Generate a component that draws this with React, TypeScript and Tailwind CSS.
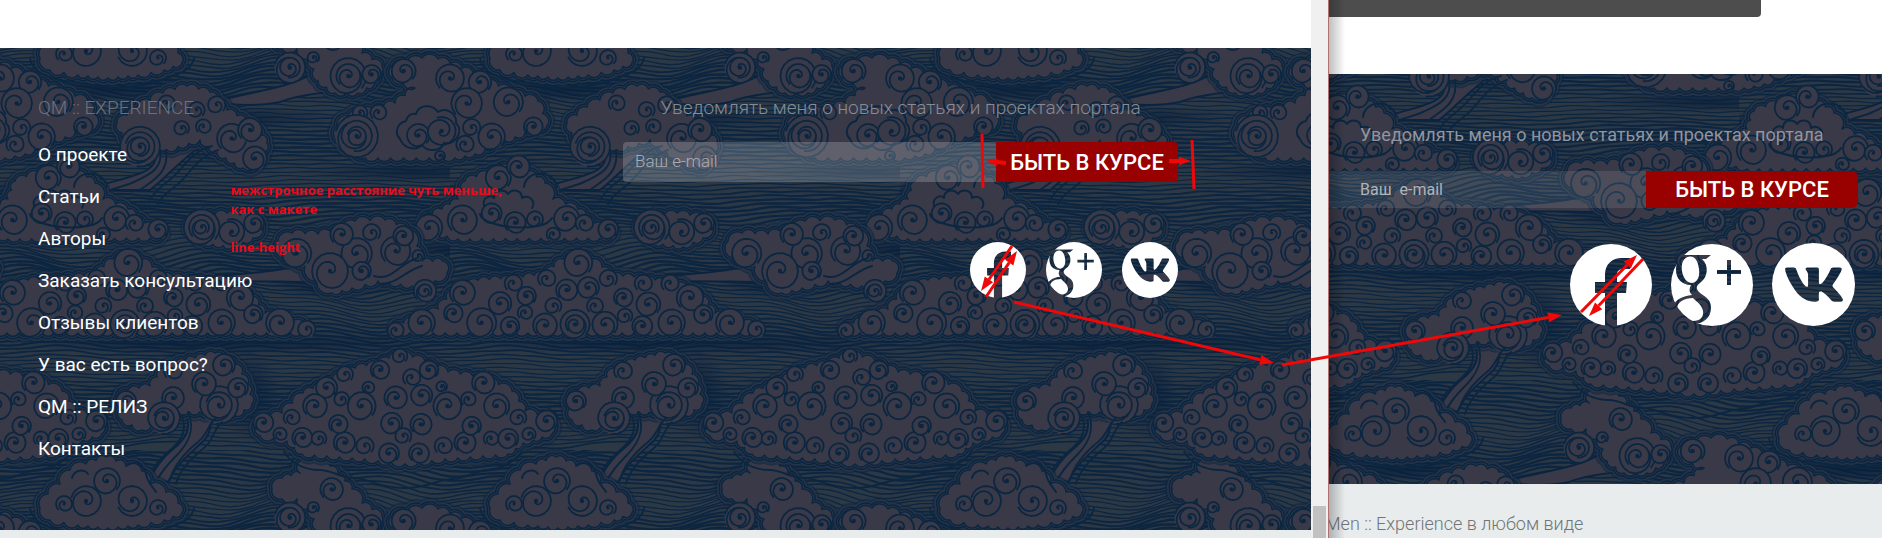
import React from "react";

type P = [number, number];
type Curl = [number, number, number, number?];

const TILE = 450;

/* ---------- geometry helpers ---------- */

const f = (n: number) => n.toFixed(1);

// Curl that follows its rim most of the way round, then winds in to the centre.
function curl([x, y, r, turn = 0]: Curl, i: number): string {
  const dir = i % 2 ? 1 : -1;
  const total = Math.PI * (r > 9 ? 3.6 : 3.1);
  const steps = 32;
  let d = "";
  for (let s = 0; s <= steps; s++) {
    const t = s / steps;
    const a = turn + (dir > 0 ? 2.4 : 0.7) + dir * t * total;
    const k = t < 0.45 ? 1 : 1 - ((t - 0.45) / 0.55) * 0.9;
    const rr = r * k;
    d += (s ? "L" : "M") + f(x + Math.cos(a) * rr) + " " + f(y + Math.sin(a) * rr);
  }
  return d;
}

// Closed outline whose edges are rows of small outward bumps.
function scallop(points: P[], size: number): string {
  let d = `M${points[0][0]} ${points[0][1]}`;
  points.forEach(([x0, y0], i) => {
    const [x1, y1] = points[(i + 1) % points.length];
    const len = Math.hypot(x1 - x0, y1 - y0);
    const n = Math.max(1, Math.round(len / size));
    const r = f((len / n) * 0.58);
    for (let k = 1; k <= n; k++) {
      d += `A${r} ${r} 0 0 1 ${f(x0 + ((x1 - x0) * k) / n)} ${f(y0 + ((y1 - y0) * k) / n)}`;
    }
  });
  return d + "Z";
}

function wave(y: number, amp: number, phase: number): string {
  let d = "";
  for (let x = -10; x <= 460; x += 10) {
    const a = (x / TILE) * Math.PI * 2;
    const v =
      Math.sin(a * 2 + phase) * amp +
      Math.sin(a * 5 + phase * 2) * amp * 0.35 +
      Math.sin(a * 9 + y) * 0.5;
    d += (d ? "L" : "M") + x + " " + f(y + v);
  }
  return d;
}

const at = (ox: number, oy: number, list: number[][]): Curl[] =>
  list.map(([x, y, r, t]) => [ox + x / 3, oy + y / 3, r / 3, t] as Curl);
const poly = (ox: number, oy: number, list: number[][]): P[] =>
  list.map(([x, y]) => [Math.round(ox + x / 3), Math.round(oy + y / 3)] as P);

/* ---------- clouds of one tile ---------- */

interface Cloud {
  body: P[];
  bump: number;
  curls: Curl[];
  extra?: string[];
  smooth?: string;
}

const clouds: Cloud[] = [
  {
    // long bank with a trailing tail
    body: poly(225, 46, [[280, 105], [268, 70], [250, 40], [215, 10], [170, 10], [140, -20], [170, -55], [225, -70], [225, -105], [290, -110], [340, -70], [380, -20], [410, 20], [470, 60], [450, 110], [400, 140], [330, 140]]),
    bump: 12,
    curls: at(225, 46, [[370, 90, 54], [370, 90, 36], [265, 35, 17], [195, 65, 46, 1], [195, 65, 30, 1], [320, -20, 34], [440, 85, 28]]),
    smooth: "M215 102C245 92 285 90 312 74L330 92C310 94 290 98 280 102C262 106 235 106 215 102Z",
  },
  {
    body: poly(225, 46, [[500, 60], [590, 35], [640, 40], [710, 65], [780, 105], [860, 135], [940, 165], [965, 240], [900, 262], [840, 285], [750, 325], [690, 335], [420, 335], [345, 290], [335, 240], [370, 210], [440, 185], [510, 170], [570, 125], [500, 95]]),
    bump: 13,
    curls: at(225, 46, [[536, 75, 36], [675, 97, 42], [765, 108, 34], [725, 172, 46], [850, 168, 44], [460, 200, 24], [405, 200, 22], [395, 270, 64, 1], [395, 270, 46, 1], [395, 270, 28, 1], [580, 268, 34], [650, 255, 42, 2], [800, 272, 40], [720, 295, 26], [645, 330, 15], [925, 242, 28], [740, 245, 26]]),
    extra: ["M406 121c-9 2-12 12-6 18 4 10 16 12 22 6 6 8 20 6 22-2 12 2 20-12 12-20 1-10-10-16-18-11-6-9-20-7-22 2-5-1-9 2-10 7"],
  },
  {
    // leaning cloud with a flowing trunk
    body: poly(0, 30, [[350, 280], [410, 230], [490, 190], [560, 168], [630, 185], [680, 240], [770, 290], [800, 340], [780, 400], [730, 415], [650, 370], [600, 330], [500, 360], [440, 330], [380, 340]]),
    bump: 12,
    curls: at(0, 30, [[420, 350, 60, 1], [420, 350, 44, 1], [420, 350, 28, 1], [695, 325, 44], [765, 385, 36], [750, 300, 36], [545, 295, 22], [610, 290, 22], [650, 225, 26], [500, 220, 24], [590, 240, 24]]),
    smooth: "M150 145C162 160 152 170 138 174C118 182 104 182 92 190L150 190C168 176 180 160 206 142C190 134 170 134 150 145Z",
    extra: ["M160 150C164 170 146 176 134 182S112 186 104 196M166 150C170 174 150 182 140 190M212 146C190 152 184 168 172 178S156 190 150 200M218 150C196 158 190 174 178 184S164 194 158 204"],
  },
  {
    body: poly(225, 196, [[590, 70], [650, 40], [700, 10], [720, -45], [790, -72], [850, -92], [910, -75], [960, -40], [985, 10], [1060, 40], [1110, 80], [1165, 98], [1160, 125], [700, 128], [600, 105]]),
    bump: 12,
    curls: at(225, 196, [[612, 95, 40], [712, 72, 44], [800, 52, 30], [870, 80, 32], [1025, 68, 38], [1078, 82, 26], [1150, 100, 30], [985, 115, 20], [820, -55, 38], [880, -88, 34], [930, 70, 24]]),
    extra: ["M524 187c2-18 30-18 33 0M480 214c2 14 64 20 72 4M484 206c-2-8 6-12 10-8 0-8 10-10 14-4 4-6 14-4 14 4 8-4 14 4 10 10"],
  },
  {
    body: poly(0, 30, [[560, 590], [610, 555], [680, 550], [760, 562], [790, 595], [760, 625], [700, 650], [610, 640]]),
    bump: 11,
    curls: at(0, 30, [[605, 592, 54], [605, 592, 38], [605, 592, 22], [695, 605, 38, 2], [762, 580, 30]]),
  },
  {
    body: poly(225, 196, [[160, 135], [200, 112], [280, 115], [350, 95], [390, 75], [480, 72], [550, 100], [575, 150], [590, 195], [655, 195], [665, 230], [630, 255], [560, 270], [460, 255], [380, 275], [320, 290], [275, 255], [240, 210], [170, 185]]),
    bump: 13,
    curls: at(225, 196, [[395, 172, 46], [512, 165, 44], [215, 172, 44], [315, 225, 54], [580, 180, 18], [350, 115, 34], [410, 225, 28], [535, 120, 30], [440, 110, 26], [600, 285, 34], [600, 285, 20]]),
    smooth: "M195 282C220 272 260 276 296 266L310 282C280 282 240 280 195 282Z",
    extra: ["M374 276C392 282 400 262 418 258M380 284C398 284 406 270 422 266"],
  },
  {
    // low symmetrical bank
    body: poly(225, 196, [[500, 395], [570, 365], [640, 340], [690, 280], [760, 252], [860, 245], [960, 235], [1015, 190], [1060, 175], [1100, 190], [1160, 238], [1260, 245], [1350, 260], [1430, 300], [1470, 350], [1550, 375], [1600, 400], [1580, 412], [520, 412]]),
    bump: 12,
    curls: at(225, 196, [[1060, 200, 42], [1025, 282, 32], [1090, 275, 32], [965, 248, 26], [1150, 248, 26], [1195, 305, 28], [905, 300, 28], [712, 290, 38], [825, 322, 34], [865, 262, 26], [770, 380, 44], [685, 352, 28], [590, 380, 40], [512, 403, 24], [855, 390, 28], [960, 388, 36], [1050, 385, 44], [1050, 385, 28], [1140, 385, 38], [1252, 390, 30], [1270, 325, 36], [1255, 262, 26], [1340, 380, 40], [1395, 305, 40], [1435, 355, 28], [1515, 380, 42], [1595, 400, 26], [1335, 262, 26], [985, 330, 24], [1110, 330, 24], [1200, 360, 22], [900, 350, 22]]),
  },
  {
    // great symmetrical cloud
    body: poly(225, 346, [[95, 225], [170, 200], [235, 140], [320, 100], [390, 65], [460, 50], [525, 20], [600, 45], [670, 78], [780, 95], [860, 135], [900, 195], [975, 215], [980, 265], [895, 290], [850, 325], [660, 340], [540, 355], [420, 340], [230, 325], [185, 285], [105, 270]]),
    bump: 12,
    curls: at(225, 346, [[525, 30, 22], [465, 72, 28], [612, 72, 28], [775, 110, 34], [305, 125, 32], [430, 125, 18], [650, 122, 16], [512, 155, 34], [590, 148, 32], [270, 180, 36], [410, 180, 42], [667, 180, 42], [815, 180, 38], [115, 230, 30], [500, 232, 32], [588, 235, 32], [965, 225, 32], [165, 265, 20], [912, 265, 20], [232, 275, 30], [282, 278, 22], [798, 278, 22], [850, 278, 30], [358, 290, 32], [535, 270, 24], [720, 290, 32], [492, 322, 30], [582, 322, 30], [360, 85, 24], [340, 235, 28], [740, 240, 28], [200, 215, 24], [880, 215, 24], [560, 95, 26], [420, 300, 26], [655, 300, 26], [350, 160, 22], [730, 160, 22]]),
    extra: ["M284 452c10 14 24 18 36 18s20 8 34 8 24 10 50 10 30-8 48-9 20-8 34-9 26-6 36-18"],
  },
  {
    // tree-shaped cloud
    body: [[118, 396], [128, 390], [150, 386], [164, 368], [185, 360], [215, 353], [236, 364], [248, 384], [252, 404], [236, 416], [200, 412], [178, 412], [160, 422], [142, 430], [122, 420]],
    bump: 12,
    curls: [[126, 401, 10], [173, 371, 9], [224, 365, 11], [173, 398, 11], [219, 405, 19, 1], [219, 405, 13, 1], [164, 418, 16, 1], [164, 418, 10, 1], [238, 388, 10], [204, 384, 12], [98, 420, 10]],
    smooth: "M184 410C194 430 184 440 172 450C162 458 156 468 150 478L168 482C178 462 190 454 200 444C214 434 208 420 216 410Z",
    extra: ["M182 416c6 16-2 26-14 36s-16 18-20 26M188 412c8 18 0 32-12 44s-16 18-20 26M216 418c-8 6-8 16-18 24s-24 22-28 38M222 422c-8 6-8 18-18 26s-24 20-28 36"],
  },
  {
    // dark-rimmed cloud
    body: [[40, 508], [48, 494], [60, 484], [70, 470], [86, 464], [106, 457], [126, 465], [142, 471], [150, 484], [166, 492], [178, 503], [182, 513], [164, 520], [138, 525], [108, 528], [78, 525], [50, 520]],
    bump: 12,
    curls: [[107, 481, 13], [86, 501, 15, 1], [132, 501, 15, 2], [64, 504, 8], [158, 508, 8]],
    extra: ["M30 508c2 16 24 22 44 24s24 6 36 6 34-2 52-8 30-10 32-22", "M72 478c2-8 12-10 16-4M126 466c8-6 18-2 20 8s8 14 10 18"],
  },
];

const waves: { d: string; w: number }[] = [];
for (let i = 0; i < 112; i++) {
  const y = (i * TILE) / 112;
  const a = (y / TILE) * Math.PI * 2;
  waves.push({
    d: wave(y, 4 + 3 * Math.sin(a * 2), Math.sin(a) * 3),
    w: 1.9 + 0.6 * Math.sin(a * 7),
  });
}

// Deep water shadows lying between the clouds.
const shadows = [
  [225, 343, 240, 7],
  [230, 118, 110, 8],
  [420, 172, 120, 7],
  [330, 285, 60, 9],
  [60, 455, 70, 8],
  [400, 482, 120, 7],
  [110, 90, 100, 8],
  [20, 195, 50, 10],
  [250, 395, 30, 30],
  [450, 250, 70, 9],
];

function CloudTile({ id }: { id: string }) {
  return (
    <g id={id} fill="none" strokeLinecap="round" strokeLinejoin="round">
      {clouds.map((c, i) => {
        const d = scallop(c.body, c.bump);
        return (
          <g key={i}>
            {c.smooth && <path d={c.smooth} fill="#393948" stroke="#0a2440" strokeWidth="2" />}
            <path d={d} stroke="#0a2440" strokeWidth="13" strokeOpacity="0.55" />
            <path d={d} stroke="#2a3646" strokeWidth="9" strokeOpacity="0.8" />
            <path d={d} stroke="#0a2440" strokeWidth="6" />
            <path d={d} stroke="#2c3646" strokeWidth="3" />
            <path d={d} fill="#393948" stroke="#0b2640" strokeWidth="1.6" />
            {c.curls.map((s, k) => (
              <g key={k}>
                <circle cx={s[0]} cy={s[1]} r={s[2]} fill="#393948" />
                <path d={curl(s, k)} stroke="#0b2640" strokeWidth="1.8" />
                <circle cx={s[0]} cy={s[1]} r={s[2] > 9 ? 2.2 : 1.5} fill="#0b2540" />
              </g>
            ))}
            {c.extra?.map((e, k) => (
              <path key={k} d={e} stroke="#0b2640" strokeWidth="2" />
            ))}
          </g>
        );
      })}
    </g>
  );
}

const offsets = [-450, 0, 450];

function CloudBackdrop({ id, x, y }: { id: string; x: number; y: number }) {
  return (
    <svg className="absolute inset-0 h-full w-full" aria-hidden="true">
      <defs>
        <radialGradient id={id + "-deep"}>
          <stop offset="0" stopColor="#08203c" stopOpacity="0.8" />
          <stop offset="1" stopColor="#08203c" stopOpacity="0" />
        </radialGradient>
        <pattern id={id} x={x} y={y} width={TILE} height={TILE} patternUnits="userSpaceOnUse">
          <rect width={TILE} height={TILE} fill="#2d3845" />
          {waves.map((w, i) => (
            <path key={i} d={w.d} fill="none" stroke="#0c2540" strokeWidth={w.w} />
          ))}
          {shadows.map(([cx, cy, rx, ry], i) => (
            <ellipse key={i} cx={cx} cy={cy} rx={rx} ry={ry * 1.6} fill={`url(#${id}-deep)`} />
          ))}
          <CloudTile id={id + "-clouds"} />
          {offsets.map((ox) =>
            offsets.map((oy) =>
              ox || oy ? <use key={ox + "_" + oy} href={"#" + id + "-clouds"} x={ox} y={oy} /> : null
            )
          )}
        </pattern>
      </defs>
      <rect width="100%" height="100%" fill={`url(#${id})`} />
    </svg>
  );
}

/* ---------- social icons ---------- */

const glyphs = {
  facebook: (
    <path d="M35 82V49H25V38H35V31C35 20 42 14 52 14H60V25H54C49 25 47 27 47 31V38H57L56 49H47V82Z" />
  ),
  google: (
    <>
      <path
        fillRule="evenodd"
        d="M12 11H40L35 15H31C38 21 37 33 30 38C25 42 24 44 29 49C36 54 40 56 40 64C40 74 32 80 22 80C10 80 0 73 2 63C4 55 12 52 21 51C18 48 18 45 20 41C10 41 5 34 5 26C5 18 8 14 12 11ZM19 12.500C12 13 10 20 11 27C12 34 16 39 21 39C27 38 29 32 28 25C27 17 24 12 19 12.500ZM22 54C13 54 6 58 6 65C7 72 14 77 22 77C29 77 33 73 32 67C31 61 26 58 22 54Z"
      />
      <path d="M56 16H60V26H70V30H60V41H56V30H46V26H56Z" />
    </>
  ),
  vk: (
    <path
      transform="translate(11 14) scale(0.106)"
      d="M545 117.7c3.700-12.500 0-21.700-17.800-21.700h-58.900c-15 0-21.900 7.900-25.600 16.700 0 0-30 73.100-72.400 120.500-13.700 13.700-20 18.100-27.500 18.100-3.700 0-9.400-4.400-9.400-16.900V117.700c0-15-4.200-21.700-16.600-21.700h-92.600c-9.400 0-15 7-15 13.500 0 14.200 21.200 17.500 23.400 57.500v86.800c0 19-3.400 22.500-10.900 22.500-20 0-68.600-73.400-97.400-157.400-5.800-16.300-11.500-22.900-26.600-22.900H38.800c-16.800 0-20.200 7.900-20.200 16.700 0 15.600 20 93.100 93.100 195.500C160.400 378.100 229 416 291.400 416c37.500 0 42.100-8.400 42.100-22.900 0-66.800-3.400-73.100 15.400-73.100 8.700 0 23.700 4.400 58.700 38.100 40 40 46.600 57.900 69 57.900h58.900c16.800 0 25.300-8.400 20.400-25-11.200-34.900-86.900-106.700-90.300-111.500-8.700-11.200-6.200-16.200 0-26.200.1-.1 72-101.300 79.400-135.600z"
    />
  ),
};

function Social({ name, pane, className }: { name: keyof typeof glyphs; pane: string; className: string }) {
  const id = `${pane}-${name}`;
  return (
    <a href="#" aria-label={name} className={className}>
      <svg viewBox="0 0 82 82" className="h-full w-full">
        <mask id={id}>
          <rect width="82" height="82" fill="#fff" />
          <g fill="#000">{glyphs[name]}</g>
        </mask>
        <circle cx="41" cy="41" r="41" fill="#fff" mask={`url(#${id})`} />
      </svg>
    </a>
  );
}

/* ---------- review marks ---------- */

function Arrow({ from, to, w = 3, head = 14 }: { from: P; to: P; w?: number; head?: number }) {
  const a = Math.atan2(to[1] - from[1], to[0] - from[0]);
  const bx = to[0] - Math.cos(a) * head;
  const by = to[1] - Math.sin(a) * head;
  const s = head * 0.36;
  return (
    <>
      <path d={`M${from[0]} ${from[1]}L${f(bx)} ${f(by)}`} stroke="#f00808" strokeWidth={w} />
      <path
        fill="#f00808"
        d={`M${to[0]} ${to[1]}L${f(bx - Math.sin(a) * s)} ${f(by + Math.cos(a) * s)}L${f(bx + Math.sin(a) * s)} ${f(by - Math.cos(a) * s)}Z`}
      />
    </>
  );
}

function Marks() {
  return (
    <svg className="pointer-events-none absolute top-0 left-0" width="1882" height="538" aria-hidden="true">
      <path d="M982 134L983 188M1192 140L1194 189" stroke="#f00808" strokeWidth="3" />
      <Arrow from={[1006, 163]} to={[986, 161]} head={11} w={4} />
      <Arrow from={[1169, 161]} to={[1191, 161]} head={12} w={4} />
      <Arrow from={[1012, 246]} to={[981, 291]} />
      <Arrow from={[986, 297]} to={[1017, 251]} />
      <Arrow from={[1014, 302]} to={[1274, 363]} />
      <Arrow from={[1282, 365]} to={[1562, 315]} />
      <Arrow from={[1581, 312]} to={[1637, 255]} />
      <Arrow from={[1643, 259]} to={[1589, 316]} />
    </svg>
  );
}

const links = [
  "О проекте",
  "Статьи",
  "Авторы",
  "Заказать консультацию",
  "Отзывы клиентов",
  "У вас есть вопрос?",
  "QM :: РЕЛИЗ",
  "Контакты",
];

export default function App() {
  return (
    <div className="relative grid h-screen grid-cols-[1311fr_18px_553fr] overflow-hidden bg-white font-['Roboto',sans-serif]">
      <div className="flex min-w-0 flex-col bg-[#e8ecec]">
        <div className="h-12 shrink-0 bg-white" />
        <footer className="relative shrink-0 overflow-hidden">
          <CloudBackdrop id="sky-left" x={0} y={-48} />
          <div className="relative flex justify-between pt-[46px] pr-[133px] pb-[60px] pl-[38px]">
            <div className="flex">
              <nav>
                <h2 className="mb-3 text-[19px] leading-7 font-light text-[#6b727e]">QM :: EXPERIENCE</h2>
                <ul>
                  {links.map((l) => (
                    <li key={l} className="h-[42px] text-[19px] leading-[42px] text-white">
                      <a href="#">{l}</a>
                    </li>
                  ))}
                </ul>
              </nav>
              <div className="-ml-[22px] pt-[87px] font-['Open_Sans',sans-serif] text-[13px] leading-[19px] font-bold text-[#e80c1a]">
                <p>
                  межстрочное расстояние чуть меньше,
                  <br />
                  как с макете
                </p>
                <p className="mt-[19px]">line-height</p>
              </div>
            </div>
            <div className="w-[555px]">
              <h2 className="mb-5 text-center text-[19px] leading-7 font-light text-[#858c96]">
                Уведомлять меня о новых статьях и проектах портала
              </h2>
              <form className="flex h-10">
                <input
                  type="email"
                  aria-label="Ваш e-mail"
                  placeholder="Ваш e-mail"
                  className="min-w-0 flex-1 rounded-l bg-white/20 px-3 text-[17px] font-light text-white outline-none placeholder:text-[#a9adb4]"
                />
                <button type="button" className="w-[182px] rounded-r bg-[#990000] text-[22px] font-medium whitespace-nowrap text-white">
                  БЫТЬ В КУРСЕ
                </button>
              </form>
              <div className="mt-[60px] flex justify-end gap-5">
                <Social name="facebook" pane="l" className="h-14 w-14" />
                <Social name="google" pane="l" className="h-14 w-14" />
                <Social name="vk" pane="l" className="h-14 w-14" />
              </div>
            </div>
          </div>
        </footer>
      </div>

      <div className="flex flex-col justify-end border-r border-[#b07070] bg-[#f0f0f0] px-0.5">
        <div className="h-8 bg-[#c1c1c1]" />
      </div>

      <div className="relative flex min-w-0 flex-col overflow-hidden bg-[#e8ecec]">
        <div className="h-[74px] shrink-0 bg-white">
          <div className="mr-[121px] h-[17px] rounded-br-sm bg-[#4d4d4d]" />
        </div>
        <footer className="relative shrink-0 overflow-hidden">
          <CloudBackdrop id="sky-right" x={-40} y={-144} />
          <div className="relative pt-[47px] pr-6 pb-[158px]">
            <h2 className="mb-[22px] pl-[31px] text-lg leading-7 font-normal whitespace-nowrap text-[#9095a0]">
              Уведомлять меня о новых статьях и проектах портала
            </h2>
            <form className="flex h-[37px]">
              <input
                type="email"
                aria-label="Ваш e-mail"
                placeholder="Ваш  e-mail"
                className="min-w-0 flex-1 bg-white/10 pl-[31px] text-base whitespace-pre text-white outline-none placeholder:text-[#b0b4ba]"
              />
              <button type="button" className="w-[212px] rounded-r-md bg-[#990000] text-[22px] font-medium whitespace-nowrap text-white">
                БЫТЬ В КУРСЕ
              </button>
            </form>
            <div className="mt-[35px] flex items-center justify-end gap-[19px] pr-[3px]">
              <Social name="facebook" pane="r" className="h-[82px] w-[82px]" />
              <Social name="google" pane="r" className="h-[82px] w-[82px]" />
              <Social name="vk" pane="r" className="h-[83px] w-[83px]" />
            </div>
          </div>
        </footer>
        <p className="-ml-1 pt-[26px] text-lg leading-7 font-light text-[#707477]">Men :: Experience в любом виде</p>
        <div className="pointer-events-none absolute inset-y-0 left-0 w-4 bg-linear-to-r from-black/25 to-transparent" />
      </div>

      <Marks />
    </div>
  );
}
